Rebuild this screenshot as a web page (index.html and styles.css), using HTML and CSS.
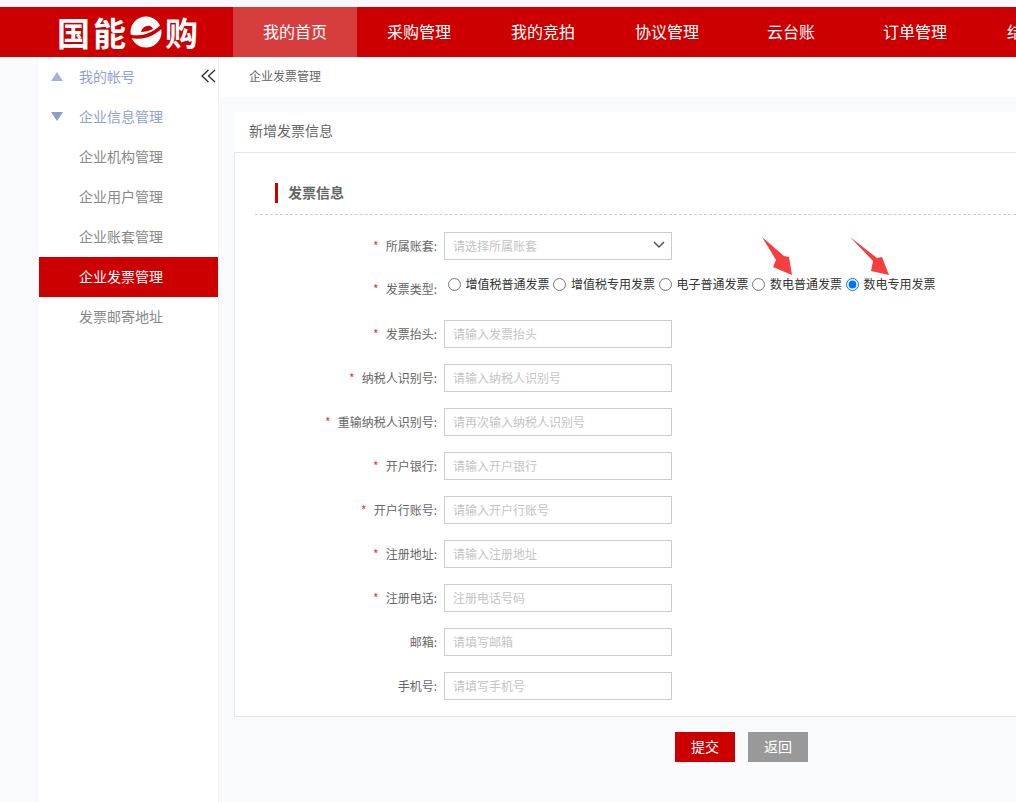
FILE: index.html
```html
<!DOCTYPE html>
<html lang="zh">
<head>
<meta charset="utf-8" />
<title>新增发票信息</title>
<link rel="stylesheet" href="styles.css">
</head>
<body>
<div class="top_strip"></div>

<div class="header">
  <div class="logo">
    <span class="logo_txt">国能</span>
    <svg class="logo_e" viewBox="0 0 32 32" width="32" height="32">
      <circle cx="16" cy="16" r="15.5" fill="#fff"/>
      <path d="M11 16 C12 11 17 9 20 10 C22 11 23 12 23 13 C19 15 15 16 11 16 Z" fill="#c00"/>
      <path d="M-1 20 C10 23 23 20 33 9" fill="none" stroke="#c00" stroke-width="3.5"/>
    </svg>
    <span class="logo_txt">购</span>
  </div>
  <div class="nav">
    <a class="nav_item active">我的首页</a>
    <a class="nav_item">采购管理</a>
    <a class="nav_item">我的竞拍</a>
    <a class="nav_item">协议管理</a>
    <a class="nav_item">云台账</a>
    <a class="nav_item">订单管理</a>
    <a class="nav_item">结算管理</a>
  </div>
</div>

<div class="wrap">
  <div class="sidebar">
    <div class="side_item top">
      <span class="tri up"></span>我的帐号
      <svg class="collapse" viewBox="0 0 15 14" width="15" height="14">
        <path d="M7.5 1 L1 7 L7.5 13 M14 1 L7.5 7 L14 13" fill="none" stroke="#222" stroke-width="1.2"/>
      </svg>
    </div>
    <div class="side_item top"><span class="tri down"></span>企业信息管理</div>
    <div class="side_item">企业机构管理</div>
    <div class="side_item">企业用户管理</div>
    <div class="side_item">企业账套管理</div>
    <div class="side_item current">企业发票管理</div>
    <div class="side_item">发票邮寄地址</div>
  </div>

  <div class="content">
    <div class="crumb">企业发票管理</div>
    <div class="card_title">新增发票信息</div>
    <div class="card">
      <div class="sec_title"><span>发票信息</span></div>
      <form class="form">
        <div class="row">
          <label class="lbl"><i>*</i>所属账套:</label>
          <div class="select">请选择所属账套
            <svg viewBox="0 0 12 8" width="12" height="8"><path d="M1 1 L6 6 L11 1" fill="none" stroke="#555" stroke-width="1.5"/></svg>
          </div>
        </div>
        <div class="row">
          <label class="lbl type"><i>*</i>发票类型:</label>
          <div class="radios">
            <label><input type="radio" name="t">增值税普通发票</label>
            <label><input type="radio" name="t">增值税专用发票</label>
            <label><input type="radio" name="t">电子普通发票</label>
            <label><input type="radio" name="t">数电普通发票</label>
            <label><input type="radio" name="t" checked>数电专用发票</label>
          </div>
        </div>
        <div class="row">
          <label class="lbl"><i>*</i>发票抬头:</label>
          <input class="txt" type="text" placeholder="请输入发票抬头">
        </div>
        <div class="row">
          <label class="lbl"><i>*</i>纳税人识别号:</label>
          <input class="txt" type="text" placeholder="请输入纳税人识别号">
        </div>
        <div class="row">
          <label class="lbl"><i>*</i>重输纳税人识别号:</label>
          <input class="txt" type="text" placeholder="请再次输入纳税人识别号">
        </div>
        <div class="row">
          <label class="lbl"><i>*</i>开户银行:</label>
          <input class="txt" type="text" placeholder="请输入开户银行">
        </div>
        <div class="row">
          <label class="lbl"><i>*</i>开户行账号:</label>
          <input class="txt" type="text" placeholder="请输入开户行账号">
        </div>
        <div class="row">
          <label class="lbl"><i>*</i>注册地址:</label>
          <input class="txt" type="text" placeholder="请输入注册地址">
        </div>
        <div class="row">
          <label class="lbl"><i>*</i>注册电话:</label>
          <input class="txt" type="text" placeholder="注册电话号码">
        </div>
        <div class="row">
          <label class="lbl">邮箱:</label>
          <input class="txt" type="text" placeholder="请填写邮箱">
        </div>
        <div class="row">
          <label class="lbl">手机号:</label>
          <input class="txt" type="text" placeholder="请填写手机号">
        </div>
      </form>
    </div>
    <div class="btns">
      <a class="btn red">提交</a>
      <a class="btn gray">返回</a>
    </div>
  </div>
</div>

<!-- red arrows drawn over the page -->
<svg class="arrow a1" viewBox="0 0 32 40" width="32" height="40"><polygon points="1,1 23,20 28,21 31,39 12,31 15,24" fill="#f73e3e"/></svg>
<svg class="arrow a2" viewBox="0 0 42 40" width="42" height="40"><polygon points="1,1 28,22 33,21 40,39 22,35 24,25" fill="#f73e3e"/></svg>
</body>
</html>
```

FILE: styles.css
```css
* {
     box-sizing: border-box;
}
html, body {
     height: 100%;
}
body {
     margin: 0;
     overflow: hidden;
     font-family: "Noto Sans CJK SC", "Liberation Sans", sans-serif;
     font-size: 12px;
     color: #666;
     background: #f9fafc;
}
.top_strip {
     height: 7px;
     background: #f7f8fa;
}
.header {
     display: flex;
     height: 50px;
     background: #cc0000;
     overflow: hidden;
}
.logo {
     flex: none;
     width: 233px;
     padding-left: 57px;
     display: flex;
     align-items: center;
     color: #fff;
}
.logo_txt {
     font-size: 33px;
     font-weight: 700;
     line-height: 50px;
     letter-spacing: 3px;
     white-space: nowrap;
}
.logo_e {
     flex: none;
     margin: 0 3px 0 1px;
}
.nav {
     display: flex;
     flex: none;
}
.nav_item {
     flex: none;
     width: 124px;
     line-height: 48px;
     text-align: center;
     font-size: 16px;
     color: #fff;
}
.nav_item.active {
     background: #d63e3e;
}
.wrap {
     display: flex;
     height: 745px;
}
.sidebar {
     flex: none;
     width: 180px;
     margin-left: 39px;
     background: #fff;
     border-right: 1px solid #f0f1f4;
     font-size: 14px;
}
.side_item {
     display: flex;
     align-items: center;
     height: 40px;
     padding: 0 0 2px 40px;
     color: #888;
}
.side_item.top {
     color: #8fa3cf;
     padding-left: 12px;
}
.side_item.current {
     background: #cc0000;
     color: #fff;
}
.tri {
     width: 0;
     height: 0;
     margin-right: 16px;
     border-left: 6px solid transparent;
     border-right: 6px solid transparent;
}
.tri.up {
     border-bottom: 9px solid #a3b3d6;
}
.tri.down {
     border-top: 9px solid #8c9fcb;
}
.collapse {
     margin-left: auto;
     margin-right: 2px;
}
.content {
     flex: 1;
     min-width: 0;
}
.crumb {
     height: 40px;
     line-height: 38px;
     padding-left: 30px;
     background: #fff;
     color: #666;
}
.card_title {
     height: 40px;
     line-height: 36px;
     margin: 15px 0 0 15px;
     padding-left: 15px;
     font-size: 14px;
     background: #fff;
}
.card {
     height: 565px;
     margin-left: 15px;
     padding: 30px 0 0 20px;
     background: #fff;
     border: 1px solid #e4e6e8;
     border-right: 0;
}
.sec_title {
     height: 32px;
     padding-bottom: 12px;
     border-bottom: 1px dashed #ccc;
}
.sec_title span {
     display: block;
     height: 20px;
     line-height: 18px;
     padding-left: 10px;
     margin-left: 20px;
     border-left: 3px solid #cc0000;
     font-size: 14px;
     font-weight: 700;
     color: #666;
}
.form {
     padding-top: 17px;
}
.row {
     display: flex;
     height: 28px;
     margin-bottom: 16px;
     align-items: center;
}
.lbl {
     flex: none;
     width: 190px;
     text-align: right;
     padding: 0 7px 2px 0;
     white-space: nowrap;
     margin-left: -1px;
}
.lbl.type {
     padding-bottom: 4px;
}
.lbl i {
     color: #e33;
     font-style: normal;
     margin-right: 7px;
}
.txt, .select {
     flex: none;
     width: 228px;
     height: 28px;
     padding: 0 8px 2px;
     border: 1px solid #ccc;
     background: #fff;
     font: 12px "Noto Sans CJK SC", sans-serif;
     outline: none;
}
.txt::placeholder {
     color: #c4c4c4;
}
.select {
     display: flex;
     align-items: center;
     justify-content: space-between;
     color: #c4c4c4;
     padding-right: 6px;
}
.radios {
     display: flex;
     align-self: flex-start;
     line-height: 16px;
     color: #333;
}
.radios label {
     display: flex;
     align-items: center;
     margin-left: 3.5px;
     white-space: nowrap;
}
.radios input {
     width: 13px;
     height: 13px;
     margin: 0 5px 0 0;
}
.btns {
     display: flex;
     gap: 13px;
     margin: 15px 0 0 456px;
}
.btn {
     width: 60px;
     height: 30px;
     line-height: 28px;
     text-align: center;
     font-size: 14px;
     color: #fff;
}
.btn.red {
     background: #cc0000;
}
.btn.gray {
     background: #999;
}
.arrow {
     position: absolute;
}
.a1 {
     left: 761px;
     top: 236px;
}
.a2 {
     left: 849px;
     top: 236px;
}
```
